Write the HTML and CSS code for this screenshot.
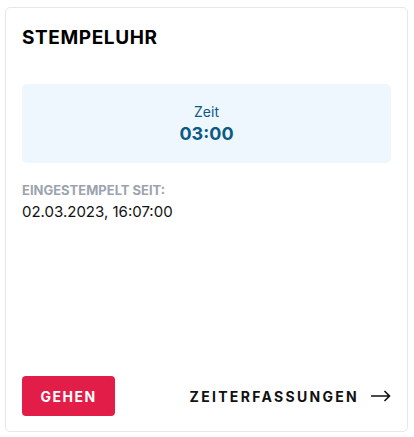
FILE: index.html
```html
<!DOCTYPE html>
<html lang="de">
<head>
  <meta charset="UTF-8">
  <title>Stempeluhr</title>
  <link rel="stylesheet" href="styles.css">
</head>
<body>
  <div class="card">
    <h2 class="title">STEMPELUHR</h2>
    <div class="timer">
      <div class="timer-label">Zeit</div>
      <div class="timer-value">03:00</div>
    </div>
    <div class="since-label">EINGESTEMPELT SEIT:</div>
    <div class="since-value">02.03.2023, 16:07:00</div>
    <div class="footer">
      <button class="btn-go">GEHEN</button>
      <a href="#" class="link">ZEITERFASSUNGEN
        <svg width="20" height="12" viewBox="0 0 20 12" fill="none" stroke="#111" stroke-width="1.6">
          <path d="M0 6h18.5M13.5 1l5 5-5 5"/>
        </svg>
      </a>
    </div>
  </div>
</body>
</html>
```

FILE: styles.css
```css
html, body{
  height: 100%;
}
body{
  margin: 0;
  padding: 7px 6px 5px 5px;
  box-sizing: border-box;
  background: #fff;
  font-family: "Inter", "Liberation Sans", sans-serif;
  color: #111;
}
.card{
  height: 100%;
  box-sizing: border-box;
  border: 1px solid #e5e7eb;
  border-radius: 5px;
  padding: 16px 16px 15px 16px;
  display: flex;
  flex-direction: column;
}
.title{
  margin: 0;
  font-size: 19px;
  line-height: 28px;
  font-weight: 700;
  letter-spacing: 0.6px;
  color: #000;
}
.timer{
  margin-top: 32px;
  height: 79px;
  background: #eff7fe;
  border-radius: 5px;
  display: flex;
  flex-direction: column;
  align-items: center;
  justify-content: center;
  color: #0b5a86;
}
.timer-label{
  font-size: 14px;
  line-height: 20px;
}
.timer-value{
  font-size: 18px;
  line-height: 24px;
  font-weight: 700;
}
.since-label{
  margin-top: 18px;
  font-size: 13px;
  line-height: 18px;
  font-weight: 700;
  color: #9ca3af;
}
.since-value{
  margin-top: 2px;
  font-size: 15px;
  line-height: 22px;
}
.footer{
  margin-top: auto;
  display: flex;
  justify-content: space-between;
  align-items: center;
}
.btn-go{
  width: 93px;
  height: 40px;
  border: none;
  border-radius: 4px;
  background: #e11d48;
  color: #fff;
  font-family: inherit;
  font-size: 14px;
  font-weight: 700;
  letter-spacing: 1.5px;
  padding: 0;
}
.link{
  display: flex;
  align-items: center;
  gap: 12px;
  text-decoration: none;
  color: #111;
  font-size: 14px;
  font-weight: 700;
  letter-spacing: 2.3px;
}
```
